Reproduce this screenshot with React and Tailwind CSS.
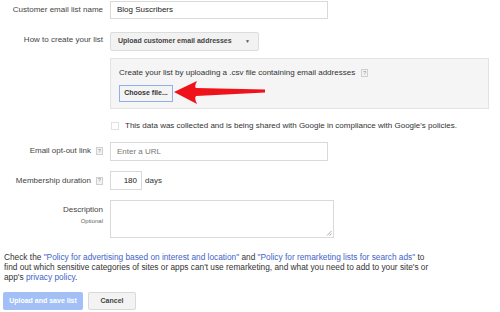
const Help = () => (
  <span className="inline-flex h-[8px] w-[7px] items-center justify-center border border-[#cfcfcf] bg-[#f3f3f3] text-[5px] leading-none text-[#888]">
    ?
  </span>
);

export default function App() {
  return (
    <div className="relative h-[312px] w-[500px] overflow-hidden bg-white font-['Liberation_Sans',Arial,sans-serif] text-[8px] text-[#333]">
      <div className="pt-[1px]">
        {/* list name */}
        <div className="flex items-center">
          <div className="w-[103px] text-right text-[#444]">Customer email list name</div>
          <div className="ml-[7px] flex h-[18px] w-[218px] items-center border border-[#d9d9d9] pl-[6px] text-[#222]">
            Blog Suscribers
          </div>
        </div>

        {/* how to create */}
        <div className="mt-[13px] flex items-start">
          <div className="w-[103px] pt-[2px] text-right text-[#444]">How to create your list</div>
          <div className="ml-[7px] flex h-[19px] w-[149px] items-center justify-between whitespace-nowrap rounded-[2px] border border-[#dcdcdc] bg-[#f2f2f2] pl-[7px] pr-[8px] text-[7px] font-bold text-[#444]">
            <span>Upload customer email addresses</span>
            <span className="text-[5px] text-[#555]">▼</span>
          </div>
        </div>

        {/* upload box */}
        <div className="ml-[110px] mt-[7px] h-[51px] w-[379px] border border-[#e3e3e3] bg-[#f5f5f5] pl-[8px] pt-[8px]">
          <div className="flex items-center gap-[6px] text-[#333]">
            <span>Create your list by uploading a .csv file containing email addresses</span>
            <Help />
          </div>
          <div className="mt-[6px] flex h-[17px] w-[54px] items-center justify-center border border-[#8eaff0] bg-[#f4f4f4] text-[7px] font-bold text-[#333]">
            Choose file...
          </div>
        </div>

        {/* consent */}
        <div className="ml-[111px] mt-[11px] flex items-center">
          <span className="h-[8px] w-[8px] border border-[#e2e2e2] bg-white" />
          <span className="ml-[6px] text-[#333]">
            This data was collected and is being shared with Google in compliance with Google's policies.
          </span>
        </div>

        {/* opt-out */}
        <div className="mt-[10px] flex items-start">
          <div className="flex w-[103px] items-center justify-end gap-[5px] pt-[3px] text-[#444]">
            <span>Email opt-out link</span>
            <Help />
          </div>
          <div className="ml-[7px] flex h-[19px] w-[218px] items-center border border-[#d9d9d9] pl-[6px] text-[#777]">
            Enter a URL
          </div>
        </div>

        {/* duration */}
        <div className="mt-[10px] flex items-center">
          <div className="flex w-[103px] items-center justify-end gap-[5px] text-[#444]">
            <span>Membership duration</span>
            <Help />
          </div>
          <div className="ml-[7px] flex h-[19px] w-[32px] items-center justify-end border border-[#d9d9d9] pr-[4px] text-[#222]">
            180
          </div>
          <span className="ml-[3px] text-[#333]">days</span>
        </div>

        {/* description */}
        <div className="mt-[10px] flex items-start">
          <div className="w-[103px] pt-[4px] text-right text-[#444]">
            <div>Description</div>
            <div className="mt-[1px] text-[6px] text-[#666]">Optional</div>
          </div>
          <div className="relative ml-[7px] h-[38px] w-[224px] border border-[#d9d9d9]">
            <svg className="absolute bottom-[1px] right-[1px]" width="6" height="6" viewBox="0 0 6 6">
              <path d="M1 5.5 L5.5 1 M3.5 5.5 L5.5 3.5" stroke="#999" strokeWidth="0.8" />
            </svg>
          </div>
        </div>

        {/* policy text */}
        <p className="ml-[4px] mt-[14px] w-[432px] text-[8.3px] leading-[10px] text-[#333]">
          Check the <span className="text-[#3e63c8]">"Policy for advertising based on interest and location"</span> and{' '}
          <span className="text-[#3e63c8]">"Policy for remarketing lists for search ads"</span> to find out which sensitive
          categories of sites or apps can't use remarketing, and what you need to add to your site's or app's{' '}
          <span className="text-[#3e63c8]">privacy policy</span>.
        </p>

        {/* actions */}
        <div className="ml-[3px] mt-[10px] flex gap-[5px]">
          <div className="flex h-[18px] w-[80px] items-center justify-center rounded-[2px] bg-[#a2bff6] text-[7px] font-bold text-white">
            Upload and save list
          </div>
          <div className="flex h-[18px] w-[48px] items-center justify-center rounded-[2px] border border-[#d9d9d9] bg-[#f3f3f3] text-[7px] font-bold text-[#444]">
            Cancel
          </div>
        </div>
      </div>

      {/* red annotation arrow */}
      <svg className="absolute left-[172px] top-[79px]" width="96" height="27" viewBox="0 0 96 27">
        <path
          d="M2 13 L25 2 Q22 8 24 9 L93 10.5 L93 13.5 L24 17 Q22 19 25 25 Z"
          fill="#f0121a"
        />
      </svg>
    </div>
  );
}
